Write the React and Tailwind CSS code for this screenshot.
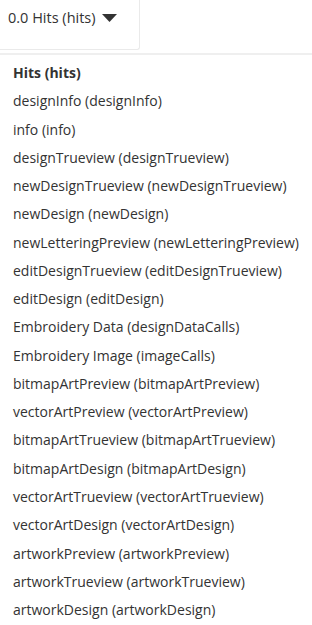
import React from 'react';

const items = [
  ['designInfo', 'designInfo'],
  ['info', 'info'],
  ['designTrueview', 'designTrueview'],
  ['newDesignTrueview', 'newDesignTrueview'],
  ['newDesign', 'newDesign'],
  ['newLetteringPreview', 'newLetteringPreview'],
  ['editDesignTrueview', 'editDesignTrueview'],
  ['editDesign', 'editDesign'],
  ['Embroidery Data', 'designDataCalls'],
  ['Embroidery Image', 'imageCalls'],
  ['bitmapArtPreview', 'bitmapArtPreview'],
  ['vectorArtPreview', 'vectorArtPreview'],
  ['bitmapArtTrueview', 'bitmapArtTrueview'],
  ['bitmapArtDesign', 'bitmapArtDesign'],
  ['vectorArtTrueview', 'vectorArtTrueview'],
  ['vectorArtDesign', 'vectorArtDesign'],
  ['artworkPreview', 'artworkPreview'],
  ['artworkTrueview', 'artworkTrueview'],
  ['artworkDesign', 'artworkDesign'],
];

export default function App() {
  return (
    <div className="w-[312px] h-[625px] bg-white text-[#333] overflow-hidden" style={{ fontFamily: '"Open Sans", "Noto Sans", sans-serif' }}>
      {/* metric selector */}
      <div className="w-[140px] h-[50px] border-r border-b border-[#eaeaea] rounded-br-[3px] flex items-start pt-[7px] pl-[8px]">
        <button className="flex items-center gap-[6px] text-[14.5px]">
          <span>0.0 Hits (hits)</span>
          <svg width="15" height="8" viewBox="0 0 15 8"><path d="M0 0h15L7.5 8z" fill="#333" /></svg>
        </button>
      </div>

      {/* dropdown list */}
      <div className="mt-[3px] border-t-2 border-[#efefef] pt-[4px] pl-[13px] text-[14px] leading-[28.26px]">
        <div className="font-bold">Hits (hits)</div>
        {items.map(([label, key]) => (
          <div key={key}>{label} ({key})</div>
        ))}
      </div>
    </div>
  );
}
